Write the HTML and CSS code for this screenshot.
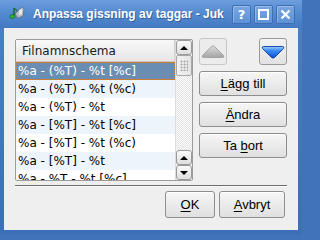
FILE: index.html
```html
<!DOCTYPE html>
<html lang="sv">
<head>
<meta charset="utf-8">
<title>Anpassa gissning av taggar - Juk</title>
<link rel="stylesheet" href="styles.css">
</head>
<body>
<div class="window">
  <div class="titlebar">
    <svg class="app-icon" width="17" height="16" viewBox="0 0 17 16">
      <path d="M7 9 L14 2 L16 4 L15 11 L10 13 Z" fill="#b9bcc2" stroke="#6d7077" stroke-width="0.8"/>
      <path d="M11 5 L14 4 L14 9 L11 10 Z" fill="#e6e8ea"/>
      <path d="M6 3 L6 11" stroke="#0b5e17" stroke-width="1.2"/>
      <path d="M6 3 Q8 4 9 6" stroke="#0b5e17" stroke-width="1" fill="none"/>
      <ellipse cx="4.3" cy="11.5" rx="2.6" ry="2" fill="#27b53b" stroke="#0b5e17" stroke-width="0.6"/>
    </svg>
    <span class="title">Anpassa gissning av taggar - Juk</span>
    <div class="tb-buttons">
      <span class="tb-btn">?</span>
      <span class="tb-btn"><span class="max-box"></span></span>
      <span class="tb-btn">
        <svg width="11" height="11" viewBox="0 0 11 11"><path d="M1.5 1.5 L9.5 9.5 M9.5 1.5 L1.5 9.5" stroke="#fff" stroke-width="2.2"/></svg>
      </span>
    </div>
  </div>
  <div class="client">
    <div class="main-row">
      <div class="listbox">
        <div class="list-area">
          <div class="list-header">Filnamnschema</div>
          <div class="rows">
            <div class="row selected">%a - (%T) - %t [%c]</div>
            <div class="row alt">%a - (%T) - %t (%c)</div>
            <div class="row">%a - (%T) - %t</div>
            <div class="row alt">%a - [%T] - %t [%c]</div>
            <div class="row">%a - [%T] - %t (%c)</div>
            <div class="row alt">%a - [%T] - %t</div>
            <div class="row">%a - %T - %t [%c]</div>
          </div>
        </div>
        <div class="scrollbar">
          <div class="sb-btn"><span class="tri-up"></span></div>
          <div class="sb-handle"><span class="grip"></span></div>
          <div class="sb-track"></div>
          <div class="sb-btn"><span class="tri-up"></span></div>
          <div class="sb-btn"><span class="tri-down"></span></div>
        </div>
      </div>
      <div class="side">
        <div class="arrow-row">
          <div class="arrow-btn disabled">
            <svg width="24" height="14" viewBox="0 0 24 14">
              <defs><linearGradient id="gg" x1="0" y1="0" x2="0" y2="1"><stop offset="0" stop-color="#dcdcdc"/><stop offset="1" stop-color="#a4a4a4"/></linearGradient></defs>
              <path d="M10.5 1.5 Q12 0.3 13.5 1.5 L22.5 10.5 Q23.5 12.5 21.5 12.5 L2.5 12.5 Q0.5 12.5 1.5 10.5 Z" fill="url(#gg)" stroke="#9a9a9a" stroke-width="0.8"/>
            </svg>
          </div>
          <div class="arrow-btn">
            <svg width="24" height="14" viewBox="0 0 24 14">
              <defs><linearGradient id="bg" x1="0" y1="0" x2="0" y2="1"><stop offset="0" stop-color="#9fd0ff"/><stop offset="0.35" stop-color="#3b8df5"/><stop offset="1" stop-color="#0a4fd6"/></linearGradient></defs>
              <path d="M2.5 1.5 L21.5 1.5 Q23.5 1.5 22.5 3.5 L13.5 12.5 Q12 13.7 10.5 12.5 L1.5 3.5 Q0.5 1.5 2.5 1.5 Z" fill="url(#bg)" stroke="#0b3a9a" stroke-width="0.9"/>
            </svg>
          </div>
        </div>
        <div class="btn"><span><u>L</u>ägg till</span></div>
        <div class="btn"><span><u>Ä</u>ndra</span></div>
        <div class="btn"><span>Ta <u>b</u>ort</span></div>
      </div>
    </div>
    <div class="separator"></div>
    <div class="bottom-row">
      <div class="btn ok"><span><u>O</u>K</span></div>
      <div class="btn cancel"><span><u>A</u>vbryt</span></div>
    </div>
  </div>
</div>
</body>
</html>
```

FILE: styles.css
```css
html, body {
  margin: 0;
  padding: 0;
  background: #3f74bb;
}

.window {
  width: 302px;
  height: 235px;
  display: flex;
  flex-direction: column;
  background: linear-gradient(#4a80c8, #3b6fb6);
  overflow: hidden;
}

.titlebar {
  height: 28px;
  flex: none;
  display: flex;
  align-items: center;
  background: linear-gradient(#6d9ddd 0%, #548bd0 45%, #4279c2 100%);
}

.app-icon {
  margin-left: 8px;
  margin-top: -2px;
  flex: none;
}

.title {
  margin-left: 8px;
  font-family: "Liberation Sans", Arial, sans-serif;
  font-weight: bold;
  font-size: 12px;
  color: #fff;
  text-shadow: 1px 1px 0 rgba(20, 50, 100, 0.45);
  white-space: nowrap;
  flex: none;
}

.tb-buttons {
  margin-left: auto;
  margin-right: 7px;
  display: flex;
  gap: 3px;
  flex: none;
}

.tb-btn {
  width: 17px;
  height: 17px;
  border: 1px solid #3d6fb4;
  border-radius: 2px;
  background: linear-gradient(#79a6e2, #5e92d6);
  box-shadow: inset 1px 1px 0 rgba(255,255,255,0.25);
  display: flex;
  align-items: center;
  justify-content: center;
  font-family: "DejaVu Sans", sans-serif;
  font-weight: bold;
  font-size: 13px;
  color: #fff;
  line-height: 1;
}

.max-box {
  width: 7px;
  height: 7px;
  border: 2px solid #fff;
}

.client {
  flex: 1;
  margin: 0 4px 5px 4px;
  background: #efefef;
  padding: 10px 11px 0 11px;
  display: flex;
  flex-direction: column;
}

.main-row {
  display: flex;
  gap: 6px;
  height: 143px;
}

.listbox {
  margin-top: 1px;
  width: 176px;
  height: 140px;
  border: 1px solid #9c9c9c;
  border-radius: 2px;
  background: #fff;
  display: flex;
  overflow: hidden;
}

.list-area {
  flex: 1;
  min-width: 0;
  overflow: hidden;
}

.list-header {
  height: 21px;
  border-bottom: 1px solid #c8c8c8;
  background: linear-gradient(#f8f8f8, #e6e6e6);
  font-family: "DejaVu Sans", sans-serif;
  font-size: 12px;
  color: #1a1a1a;
  line-height: 22px;
  padding-left: 6px;
  border-right: 1px solid #d0d0d0;
}

.row {
  height: 18px;
  line-height: 18px;
  font-family: "DejaVu Sans", sans-serif;
  font-size: 12px;
  color: #000;
  padding-left: 2px;
  white-space: nowrap;
  background: #fff;
}

.row.alt {
  background: #eef4fc;
}

.row.selected {
  background: #6a8db4;
  color: #fff;
  outline: 1px dotted #c9823c;
  outline-offset: -1px;
}

.scrollbar {
  width: 16px;
  flex: none;
  display: flex;
  flex-direction: column;
  background: repeating-conic-gradient(#e4e4e4 0 25%, #fbfbfb 0 50%) 0 0 / 2px 2px;
  border-left: 1px solid #dcdcdc;
}

.sb-btn {
  height: 13px;
  border: 1px solid #9a9a9a;
  border-radius: 3px;
  background: linear-gradient(#fafafa, #dedede);
  display: flex;
  align-items: center;
  justify-content: center;
  flex: none;
}

.sb-handle {
  height: 19px;
  border: 1px solid #a8a8a8;
  border-radius: 2px;
  background: linear-gradient(90deg, #f2f2f2, #e4e4e4);
  display: flex;
  align-items: center;
  justify-content: center;
  flex: none;
}

.grip {
  width: 8px;
  height: 11px;
  background: radial-gradient(circle, #a8a8a8 0.9px, transparent 1.1px) 0 0 / 3px 3px;
}

.sb-track {
  flex: 1;
}

.tri-up {
  width: 0;
  height: 0;
  border-left: 4px solid transparent;
  border-right: 4px solid transparent;
  border-bottom: 4px solid #000;
}

.tri-down {
  width: 0;
  height: 0;
  border-left: 4px solid transparent;
  border-right: 4px solid transparent;
  border-top: 4px solid #000;
}

.side {
  width: 88px;
  display: flex;
  flex-direction: column;
  gap: 6px;
}

.arrow-row {
  display: flex;
  justify-content: space-between;
}

.arrow-btn {
  width: 26px;
  height: 25px;
  border: 1px solid #9a9a9a;
  border-radius: 3px;
  background: linear-gradient(#f2f2f2, #e2e2e2);
  display: flex;
  align-items: center;
  justify-content: center;
}

.arrow-btn.disabled {
  border-color: #c6c6c6;
  background: #ececec;
}

.btn {
  height: 23px;
  border: 1px solid #8e8e8e;
  border-radius: 3px;
  background: linear-gradient(#f6f6f6, #e0e0e0);
  box-shadow: inset 0 1px 0 #fff;
  display: flex;
  align-items: center;
  justify-content: center;
  font-family: "Liberation Sans", Arial, sans-serif;
  font-size: 13px;
  color: #000;
}

.btn u {
  text-decoration-thickness: 1px;
  text-underline-offset: 2px;
}

.separator {
  margin-top: 4px;
  height: 1px;
  background: #6e6e6e;
  border-bottom: 1px solid #fafafa;
}

.bottom-row {
  margin-top: 4px;
  display: flex;
  justify-content: flex-end;
  gap: 4px;
  padding-right: 2px;
}

.bottom-row .btn {
  height: 25px;
}

.btn.ok {
  width: 48px;
}

.btn.cancel {
  width: 64px;
}
```
